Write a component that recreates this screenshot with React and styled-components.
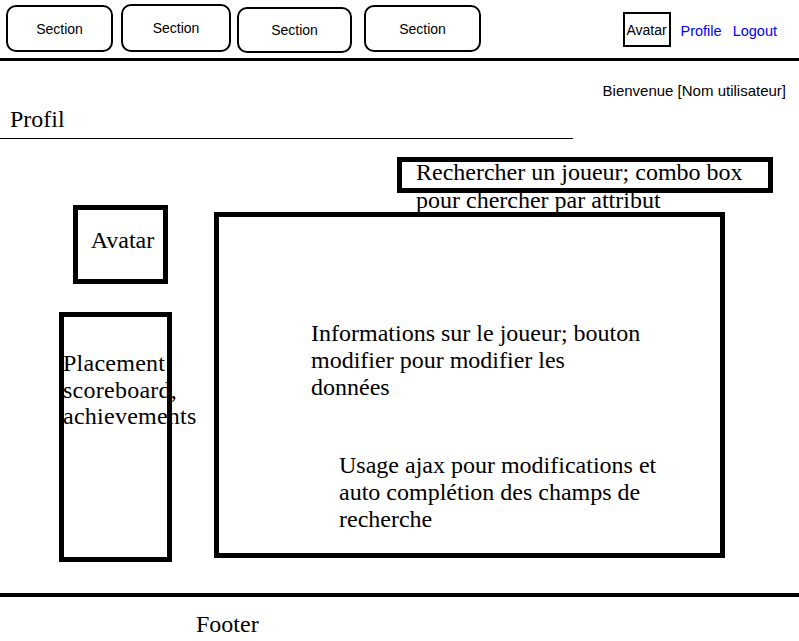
import styled, { createGlobalStyle } from "styled-components";

const sections = [
  { width: 107, top: 5, height: 47, gap: 0 },
  { width: 110, top: 4, height: 48, gap: 8 },
  { width: 115, top: 7, height: 46, gap: 6 },
  { width: 117, top: 5, height: 47, gap: 12 },
];

const App = () => {
  return (
    <Page>
      <GlobalStyle />
      <Header>
        {sections.map((s, i) => (
          <SectionButton key={i} $width={s.width} $top={s.top} $height={s.height} $gap={s.gap}>
            Section
          </SectionButton>
        ))}
        <UserArea>
          <AvatarMini>Avatar</AvatarMini>
          <NavLink href="#" $gap={10}>Profile</NavLink>
          <NavLink href="#" $gap={11}>Logout</NavLink>
        </UserArea>
      </Header>

      <Welcome>Bienvenue [Nom utilisateur]</Welcome>
      <Title>Profil</Title>

      <Content>
        <LeftColumn>
          <AvatarCard>Avatar</AvatarCard>
          <ScoreCard>
            <ScoreText>
              Placement<br />scoreboard,<br />achievements
            </ScoreText>
          </ScoreCard>
        </LeftColumn>
        <RightColumn>
          <SearchBox>
            <SearchText>
              Rechercher un joueur; combo box<br />pour chercher par attribut
            </SearchText>
          </SearchBox>
          <MainBox>
            <Note $indent={92} $top={103}>
              Informations sur le joueur; bouton<br />modifier pour modifier les<br />données
            </Note>
            <Note $indent={120} $top={51}>
              Usage ajax pour modifications et<br />auto complétion des champs de<br />recherche
            </Note>
          </MainBox>
        </RightColumn>
      </Content>

      <Footer>Footer</Footer>
    </Page>
  );
};

const GlobalStyle = createGlobalStyle`
html, body {
  margin: 0;
  padding: 0;
  background: #fff;
}
* {
  box-sizing: border-box;
}
`;

const Page = styled.div`
width: 799px;
height: 641px;
overflow: hidden;
background: #fff;
color: #000;
font-family: "Liberation Serif", "Times New Roman", serif;
`;

const Header = styled.header`
display: flex;
align-items: flex-start;
height: 61px;
padding-left: 6px;
border-bottom: 3px solid #000;
font-family: "Liberation Sans", Arial, sans-serif;
font-size: 14px;
`;

const SectionButton = styled.div`
display: flex;
align-items: center;
justify-content: center;
width: ${(p) => p.$width}px;
height: ${(p) => p.$height}px;
margin-top: ${(p) => p.$top}px;
margin-left: ${(p) => p.$gap}px;
border: 2px solid #000;
border-radius: 10px;
`;

const UserArea = styled.div`
display: flex;
align-items: center;
margin-left: auto;
margin-top: 12px;
padding-right: 22px;
`;

const AvatarMini = styled.div`
display: flex;
align-items: center;
justify-content: center;
width: 48px;
height: 35px;
border: 2px solid #000;
font-size: 14px;
`;

const NavLink = styled.a`
margin-left: ${(p) => p.$gap}px;
margin-top: 3px;
color: #0000ff;
text-decoration: none;
font-size: 14.5px;
`;

const Welcome = styled.div`
margin-top: 21px;
padding-right: 13px;
text-align: right;
line-height: 18px;
font-family: "Liberation Sans", Arial, sans-serif;
font-size: 15px;
`;

const Title = styled.h1`
width: 573px;
margin: 6px 0 0;
padding: 0 0 6px 10px;
border-bottom: 1px solid #000;
font-weight: normal;
font-size: 24px;
line-height: 26px;
`;

const Content = styled.main`
display: flex;
align-items: flex-start;
padding-top: 18px;
font-size: 24px;
line-height: 27px;
`;

const LeftColumn = styled.div`
display: flex;
flex-direction: column;
align-items: flex-start;
width: 214px;
flex-shrink: 0;
padding-top: 48px;
`;

const AvatarCard = styled.div`
display: flex;
align-items: center;
justify-content: center;
width: 95px;
height: 79px;
margin-left: 73px;
padding: 0 0 8px 4px;
border: 5px solid #000;
`;

const ScoreCard = styled.div`
width: 113px;
height: 250px;
margin-left: 59px;
margin-top: 28px;
padding-top: 33px;
border: 5px solid #000;
overflow: visible;
`;

const ScoreText = styled.p`
margin: 0 0 0 -1px;
line-height: 26.5px;
letter-spacing: 0.25px;
white-space: nowrap;
`;

const RightColumn = styled.div`
display: flex;
flex-direction: column;
align-items: flex-start;
`;

const SearchBox = styled.div`
width: 376px;
height: 36px;
margin-left: 183px;
padding-left: 14px;
border: 5px solid #000;
overflow: visible;
`;

const SearchText = styled.p`
margin: -4px 0 0;
line-height: 28px;
white-space: nowrap;
`;

const MainBox = styled.section`
display: flex;
flex-direction: column;
width: 511px;
height: 346px;
margin-top: 19px;
border: 5px solid #000;
`;

const Note = styled.p`
margin: ${(p) => p.$top}px 0 0 ${(p) => p.$indent}px;
white-space: nowrap;
`;

const Footer = styled.footer`
margin-top: 31px;
padding: 14px 0 0 196px;
border-top: 4px solid #000;
font-size: 24px;
line-height: 26px;
`;

export default App;
